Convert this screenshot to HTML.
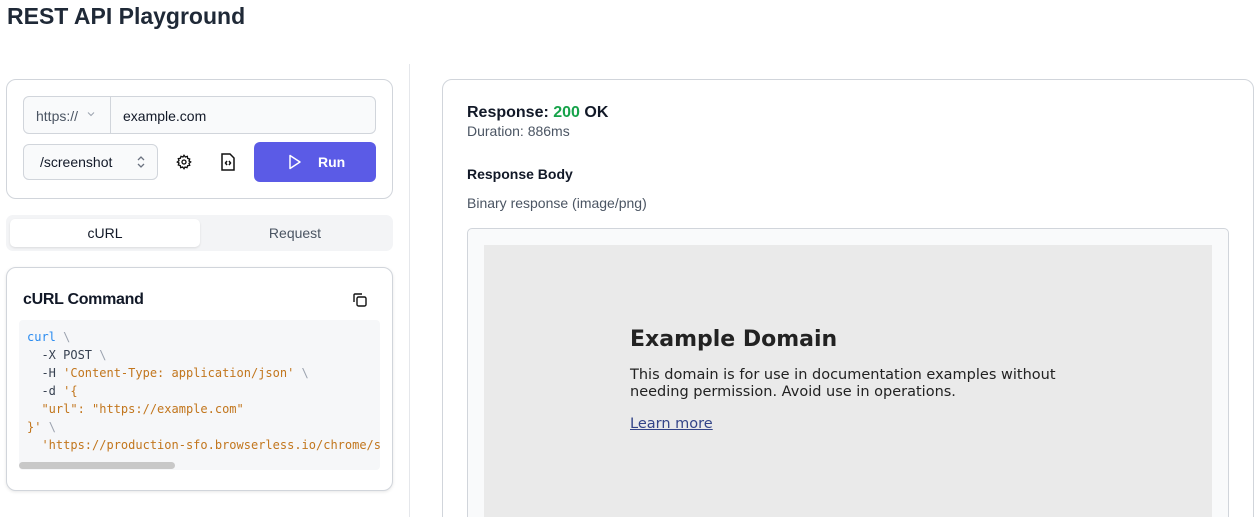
<!DOCTYPE html>
<html style="width:1256px;height:517px;overflow:hidden"><head><style>
*{box-sizing:border-box;margin:0;padding:0}
body{width:1256px;height:517px;overflow:hidden;background:#fff;font-family:"Liberation Sans",sans-serif;color:#111827;position:relative}
.abs{position:absolute}
h1{position:absolute;left:7px;top:3px;font-size:23px;font-weight:bold;color:#1f2937}
.card{position:absolute;border:1px solid #d1d5db;border-radius:10px;background:#fff}
.mono{font-family:"DejaVu Sans Mono","Liberation Mono",monospace;font-size:12px;line-height:18px;white-space:pre;color:#374151}
.o{color:#c2761d}.b{color:#2a8bf0}.g{color:#9ca3af}
</style></head><body>
<h1>REST API Playground</h1>
<div class="abs" style="left:409px;top:64px;width:1px;height:453px;background:#e5e7eb"></div>

<div class="card" style="left:6px;top:79px;width:387px;height:120px"></div>
<div class="abs" style="left:23px;top:96px;width:353px;height:38px;border:1px solid #d1d5db;border-radius:6px;background:#f9fafb"></div>
<div class="abs" style="left:110px;top:97px;width:1px;height:36px;background:#d1d5db"></div>
<div class="abs" style="left:36px;top:108px;font-size:14px;color:#4b5563">https://</div>
<svg class="abs" style="left:87px;top:111px" width="8" height="6" viewBox="0 0 8 6"><path d="M1 1.5l3 3 3-3" fill="none" stroke="#9ca3af" stroke-width="1"/></svg>
<div class="abs" style="left:123px;top:108px;font-size:14px;color:#111827">example.com</div>
<div class="abs" style="left:23px;top:144px;width:135px;height:36px;border:1px solid #d1d5db;border-radius:6px;background:#f9fafb"></div>
<div class="abs" style="left:40px;top:154px;font-size:14px;color:#111827">/screenshot</div>
<svg class="abs" style="left:135px;top:153px" width="12" height="18" viewBox="0 0 12 18"><path d="M3 7l3-3 3 3M3 11l3 3 3-3" fill="none" stroke="#6b7280" stroke-width="1.3"/></svg>
<svg class="abs" style="left:176px;top:154px" width="16" height="16" viewBox="0 0 24 24" fill="none" stroke="#111" stroke-width="2"><circle cx="12" cy="12" r="3"/><path d="M12 2l2 2.5 3-1 .5 3 3 1-1 3L22 12l-2.5 2 1 3-3 .5-1 3-3-1L12 22l-2-2.5-3 1-.5-3-3-1 1-3L2 12l2.5-2-1-3 3-.5 1-3 3 1z"/></svg>
<svg class="abs" style="left:220px;top:153px" width="16" height="18" viewBox="0 0 16 18" fill="none" stroke="#111" stroke-width="1.5"><path d="M2 1h8l4 4v12H2z"/><path d="M7 8l-1.5 2L7 12M9 8l1.5 2L9 12"/></svg>
<div class="abs" style="left:254px;top:142px;width:122px;height:40px;border-radius:6px;background:#5b5be6;color:#fff;font-size:14px;font-weight:bold"><svg class="abs" style="left:34px;top:12px" width="14" height="16" viewBox="0 0 14 16"><path d="M2 1.5l10 6.5-10 6.5z" fill="none" stroke="#fff" stroke-width="1.5" stroke-linejoin="round"/></svg><span class="abs" style="left:64px;top:12px">Run</span></div>

<div class="abs" style="left:6px;top:215px;width:387px;height:36px;background:#f3f4f6;border-radius:7px"></div>
<div class="abs" style="left:10px;top:219px;width:190px;height:28px;background:#fff;border-radius:5px;box-shadow:0 1px 2px rgba(0,0,0,.1);text-align:center;line-height:28px;font-size:14px;color:#111827">cURL</div>
<div class="abs" style="left:200px;top:219px;width:190px;height:28px;text-align:center;line-height:28px;font-size:14px;color:#4b5563">Request</div>

<div class="card" style="left:6px;top:267px;width:387px;height:224px;box-shadow:0 1px 3px rgba(0,0,0,.1)"></div>
<div class="abs" style="left:23px;top:291px;font-size:16px;font-weight:bold;color:#111827;letter-spacing:-.3px">cURL Command</div>
<svg class="abs" style="left:352px;top:292px" width="16" height="16" viewBox="0 0 16 16" fill="none" stroke="#111" stroke-width="1.4"><rect x="5" y="5" width="9" height="9" rx="1.5"/><path d="M2 10V3a1 1 0 011-1h7"/></svg>
<div class="abs" style="left:19px;top:320px;width:361px;height:150px;background:#f6f7f9;border-radius:4px;overflow:hidden">
<div class="mono" style="position:absolute;left:8px;top:8px"><span class="b">curl</span> <span class="g">\</span>
  -X POST <span class="g">\</span>
  -H <span class="o">'Content-Type: application/json'</span> <span class="g">\</span>
  -d <span class="o">'{
  "url": "https://example.com"
}'</span> <span class="g">\</span>
  <span class="o">'https://production-sfo.browserless.io/chrome/screenshot'</span></div>
<div class="abs" style="left:0;top:142px;width:156px;height:7px;border-radius:4px;background:#c8c8c8"></div>
</div>

<div class="card" style="left:442px;top:79px;width:812px;height:460px"></div>
<div class="abs" style="left:467px;top:104px;font-size:16px;font-weight:bold;color:#111827">Response: <span style="color:#16a34a">200</span> OK</div>
<div class="abs" style="left:467px;top:123px;font-size:14px;color:#4b5563">Duration: 886ms</div>
<div class="abs" style="left:467px;top:166px;font-size:14px;font-weight:bold;color:#111827">Response Body</div>
<div class="abs" style="left:467px;top:195px;font-size:14px;color:#4b5563">Binary response (image/png)</div>
<div class="abs" style="left:467px;top:228px;width:762px;height:300px;border:1px solid #d1d5db;border-radius:5px;background:#f9fafb"></div>
<div class="abs" style="left:484px;top:245px;width:728px;height:280px;background:#eaeaea"></div>
<div class="abs" style="left:630px;top:327px;font-family:'DejaVu Sans',sans-serif;font-size:22px;font-weight:bold;color:#222">Example Domain</div>
<div class="abs" style="left:630px;top:367px;font-family:'DejaVu Sans',sans-serif;font-size:14.5px;line-height:17px;color:#222;width:440px">This domain is for use in documentation examples without needing permission. Avoid use in operations.</div>
<div class="abs" style="left:630px;top:416px;font-family:'DejaVu Sans',sans-serif;font-size:14.5px;color:#334488;text-decoration:underline">Learn more</div>
</body></html>
